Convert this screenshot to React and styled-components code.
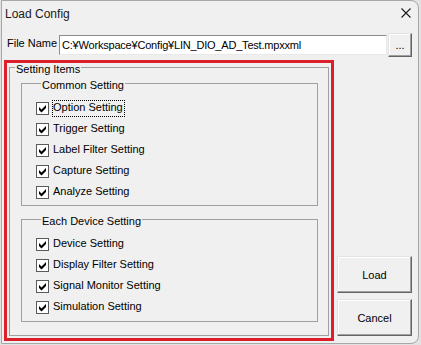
import React from 'react';
import styled, { createGlobalStyle } from 'styled-components';

const GlobalStyle = createGlobalStyle`
html, body {
  margin: 0;
  background: #e2e2e2;
  font-family: "Liberation Sans", Arial, sans-serif;
}`

const Window = styled.div`
margin-left: 1px;
width: 418px;
height: 344px;
box-sizing: border-box;
border: 1px solid #a8a8a8;
border-radius: 0 8px 8px 0;
background: #f0f0f0;
display: flex;
flex-direction: column;
overflow: hidden;`

const TitleBar = styled.div`
height: 32px;
flex: none;
box-sizing: border-box;
padding: 6px 7px 0 3px;
display: flex;
align-items: flex-start;
justify-content: space-between;`

const Title = styled.span`
font-size: 12px;
line-height: 14px;
color: #1a1a1a;`

const Close = styled.svg`
margin-top: 1px;`

const FileRow = styled.div`
height: 24px;
flex: none;
padding-left: 5px;
display: flex;
align-items: center;`

const FileLabel = styled.span`
width: 52px;
font-size: 11px;
line-height: 13px;
padding-bottom: 4px;
color: #000;`

const PathBox = styled.input`
width: 328px;
height: 20px;
box-sizing: border-box;
margin: 0;
padding: 0 0 0 2px;
border: 1px solid;
border-color: #8c8c8c #e8e8e8 #e8e8e8 #8c8c8c;
background: #fff;
font-family: "Liberation Sans", Arial, sans-serif;
font-size: 11px;
letter-spacing: -0.2px;
color: #000;
outline: 0;`

const Button = styled.button`
width: ${p => p.$w}px;
height: ${p => p.$h}px;
margin: 0 0 0 ${p => p.$ml || 0}px;
padding: 0;
box-sizing: border-box;
border: 1px solid;
border-color: #e3e3e3 #646464 #646464 #e3e3e3;
box-shadow: inset -1px -1px 0 #a0a0a0, inset 1px 1px 0 #fff;
background: #f0f0f0;
font-family: "Liberation Sans", Arial, sans-serif;
font-size: 11px;
color: #000;`

const Main = styled.div`
display: flex;
align-items: flex-start;
gap: 3px;
padding: 3px 0 0 2px;`

const Highlight = styled.div`
width: 330px;
height: 281px;
box-sizing: border-box;
border: 3px solid #dd1f2c;
padding: 0 2px 2px 2px;
display: flex;
flex-direction: column;`

const Group = styled.fieldset`
margin: ${p => p.$margin};
padding: ${p => p.$padding};
border: 1px solid #a0a0a0;
min-width: 0;
flex: ${p => (p.$fill ? 1 : 'none')};`

const Legend = styled.legend`
margin-left: 5px;
padding: 3px 1px 0;
font-size: 11px;
line-height: 6px;
color: #000;`

const Row = styled.div`
height: 21px;
display: flex;
align-items: center;`

const Box = styled.svg`
flex: none;`

const Label = styled.span`
margin-left: 3px;
padding: 0 1px 2px 0;
font-size: 11px;
line-height: 13px;
color: #000;
border: 1px dotted ${p => (p.$focus ? '#000' : 'transparent')};`

const Side = styled.div`
width: 75px;
height: 281px;
box-sizing: border-box;
padding-bottom: 5px;
display: flex;
flex-direction: column;
justify-content: flex-end;
gap: 6px;`

const Check = () => (
    <Box width="13" height="13" viewBox="0 0 13 13">
        <rect x="0.5" y="0.5" width="12" height="12" fill="#fff" stroke="#5a5a5a" />
        <path d="M3 5 L5.5 7.5 L10 3 L10 6 L5.5 10.5 L3 8 Z" fill="#000" />
    </Box>
)

const common = ['Option Setting', 'Trigger Setting', 'Label Filter Setting', 'Capture Setting', 'Analyze Setting']
const device = ['Device Setting', 'Display Filter Setting', 'Signal Monitor Setting', 'Simulation Setting']

export default function App() {
    return (
        <>
            <GlobalStyle />
            <Window>
                <TitleBar>
                    <Title>Load Config</Title>
                    <Close width="10" height="10" viewBox="0 0 10 10">
                        <path d="M0.5 0.5 L9.5 9.5 M9.5 0.5 L0.5 9.5" stroke="#1a1a1a" strokeWidth="1.1" />
                    </Close>
                </TitleBar>
                <FileRow>
                    <FileLabel>File Name</FileLabel>
                    <PathBox readOnly value="C:¥Workspace¥Config¥LIN_DIO_AD_Test.mpxxml" />
                    <Button $w={24} $h={24} $ml={1}>...</Button>
                </FileRow>
                <Main>
                    <Highlight>
                        <Group $margin="0" $padding="0 10px 0 0" $fill>
                            <Legend>Setting Items</Legend>
                            <Group $margin="7px 0 0 11px" $padding="10px 0 2px 14px">
                                <Legend>Common Setting</Legend>
                                {common.map((item, id) => (
                                    <Row key={id}>
                                        <Check />
                                        <Label $focus={id === 0}>{item}</Label>
                                    </Row>
                                ))}
                            </Group>
                            <Group $margin="9px 0 0 11px" $padding="10px 0 3px 14px">
                                <Legend>Each Device Setting</Legend>
                                {device.map((item, id) => (
                                    <Row key={id}>
                                        <Check />
                                        <Label>{item}</Label>
                                    </Row>
                                ))}
                            </Group>
                        </Group>
                    </Highlight>
                    <Side>
                        <Button $w={75} $h={37}>Load</Button>
                        <Button $w={75} $h={37}>Cancel</Button>
                    </Side>
                </Main>
            </Window>
        </>
    )
}
